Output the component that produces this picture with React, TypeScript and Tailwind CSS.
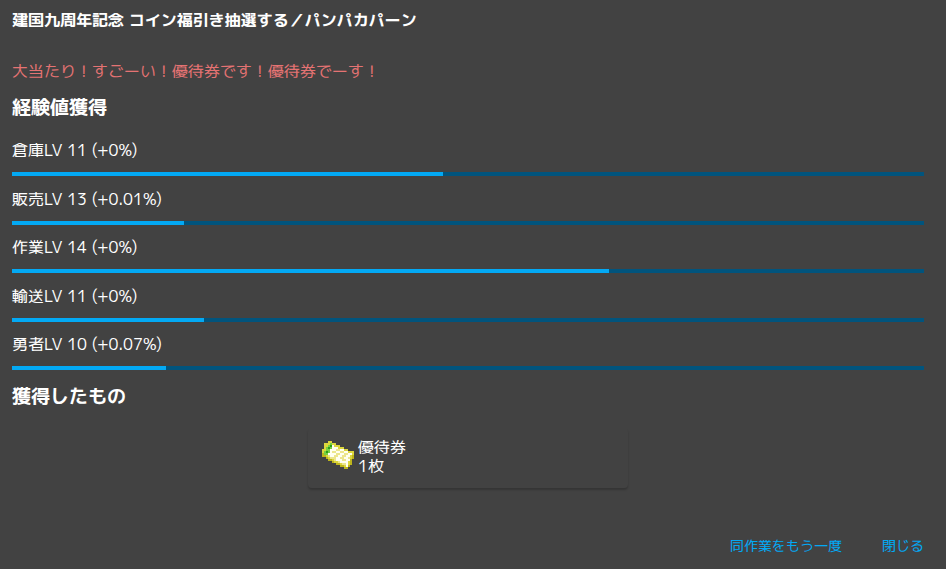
const FONT = "font-['M_PLUS_1p','Noto_Sans_CJK_JP',sans-serif]"

const skills = [
  { name: '倉庫', level: 11, gain: '+0%', progress: 47.3 },
  { name: '販売', level: 13, gain: '+0.01%', progress: 18.9 },
  { name: '作業', level: 14, gain: '+0%', progress: 65.5 },
  { name: '輸送', level: 11, gain: '+0%', progress: 21.1 },
  { name: '勇者', level: 10, gain: '+0.07%', progress: 16.9 },
]

const palette: Record<string, string> = {
  o: '#bdb51c',
  y: '#dcd63c',
  g: '#76d040',
  d: '#2f9a1c',
  w: '#fffff0',
  c: '#ece68c',
}

// 16x14 dots, one letter per dot
const ticket = [
  '...yy...........',
  '.yyygyy.........',
  '.yygdwyyy.......',
  '.ygdgwwwyyy.....',
  'yyggwwwccwwyy...',
  'ygdgwccwwccwwyyy',
  'oggwwwwccwwccwwy',
  'ooycwwccwwccwwyo',
  '..oycccwwccwwcyo',
  '...ooycwwwccwwo.',
  '.....oyycwwwwyo.',
  '.......ooyccwyo.',
  '.........ooywo..',
  '...........oo...',
]

function TicketIcon() {
  return (
    <svg viewBox="0 0 16 14" className="mt-[3px] w-8 h-7 shrink-0" shapeRendering="crispEdges" aria-hidden="true">
      {ticket.flatMap((row, y) =>
        [...row].map((dot, x) =>
          dot === '.' ? null : <rect key={`${x}-${y}`} x={x} y={y} width="1" height="1" fill={palette[dot]} />
        )
      )}
    </svg>
  )
}

export default function App() {
  return (
    <main className={`min-h-screen flex flex-col bg-[#424242] text-white text-base ${FONT}`}>
      <h1 className="px-3 pt-2 font-bold leading-6">建国九周年記念 コイン福引き抽選する／パンパカパーン</h1>

      <div className="pl-3 pr-[22px] pt-[27px]">
        <p className="text-[#e57373] leading-6">大当たり！すごーい！優待券です！優待券でーす！</p>
        <h2 className="mt-3 text-[19px] font-bold leading-6">経験値獲得</h2>

        <ul className="mt-4 h-[243px] grid grid-rows-5">
          {skills.map((skill) => (
            <li key={skill.name} className="pt-[3px]">
              <div className="leading-6">
                {skill.name}LV {skill.level} ({skill.gain})
              </div>
              <div
                role="progressbar"
                aria-label={skill.name}
                aria-valuenow={skill.progress}
                className="mt-[10px] h-1 bg-[#01547d]"
              >
                <div className="h-full bg-[#03a9f4]" style={{ width: `${skill.progress}%` }} />
              </div>
            </li>
          ))}
        </ul>

        <h2 className="mt-[6px] text-[19px] font-bold leading-6">獲得したもの</h2>
      </div>

      <section className="w-80 h-[60px] mt-5 ml-1 mr-[14px] self-center flex gap-1 rounded px-[14px] pt-[10px] shadow-[0_2px_2px_rgba(0,0,0,0.2)]">
        <TicketIcon />
        <div className="leading-[19px]">
          <p>優待券</p>
          <p>1枚</p>
        </div>
      </section>

      <footer className="mt-auto flex justify-end gap-6 px-[14px] pb-[5px] text-sm text-[#03a9f4]">
        <button type="button" className="h-9 px-2">同作業をもう一度</button>
        <button type="button" className="h-9 px-2">閉じる</button>
      </footer>
    </main>
  )
}
